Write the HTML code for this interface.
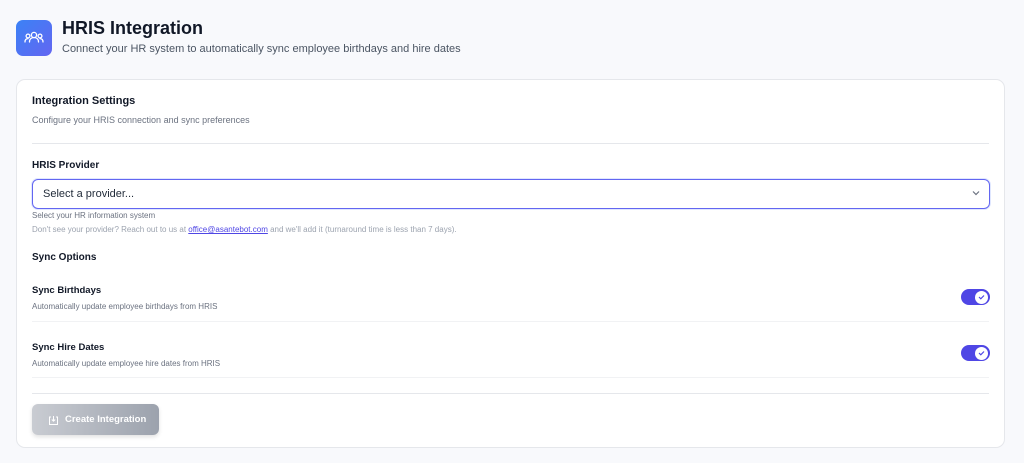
<!DOCTYPE html>
<html><head><meta charset="utf-8"><style>
*{box-sizing:border-box;margin:0;padding:0}
body{width:1024px;height:463px;background:#f8f9fc;font-family:"Liberation Sans",sans-serif;position:relative;overflow:hidden;color:#111827}
.a{position:absolute;white-space:nowrap}
.icon{left:16px;top:20px;width:36px;height:36px;border-radius:7px;background:linear-gradient(135deg,#3b82f6,#6366f1)}
.card{left:16px;top:79px;width:989px;height:369px;background:#fff;border:1px solid #e5e7eb;border-radius:9px}
.hr{height:1px;background:#e5e7eb;left:32px;width:957px}
.hr2{height:1px;background:#f1f2f4;left:32px;width:957px}
.b{font-weight:bold;font-size:10px;color:#111827}
.s{font-size:8px;color:#6b7280}
.tog{left:961px;width:29px;height:16px;border-radius:8px;background:#4f46e5}
.tog i{position:absolute;right:2px;top:1.5px;width:13px;height:13px;border-radius:50%;background:#fff}
.tog svg{position:absolute;right:4px;top:4px}
</style></head><body>
<div class="a icon"><svg width="36" height="36" viewBox="0 0 36 36" fill="none" stroke="#fff" stroke-width="1.3" stroke-linecap="round"><circle cx="18" cy="15" r="2.6"/><path d="M13.5 22c0-3 2-4.5 4.5-4.5s4.5 1.5 4.5 4.5"/><circle cx="12" cy="16" r="1.9"/><path d="M9 22c0-2.3 1.2-3.4 3-3.4"/><circle cx="24" cy="16" r="1.9"/><path d="M27 22c0-2.3-1.2-3.4-3-3.4"/></svg></div>
<div class="a" style="left:62px;top:18px;font-size:18px;font-weight:bold">HRIS Integration</div>
<div class="a" style="left:62px;top:43px;font-size:11px;color:#4b5563">Connect your HR system to automatically sync employee birthdays and hire dates</div>
<div class="a card"></div>
<div class="a" style="left:32px;top:95px;font-size:11px;font-weight:bold">Integration Settings</div>
<div class="a" style="left:32px;top:115px;font-size:9px;color:#6b7280">Configure your HRIS connection and sync preferences</div>
<div class="a hr" style="top:143px"></div>
<div class="a b" style="left:32px;top:160px">HRIS Provider</div>
<div class="a" style="left:32px;top:179px;width:958px;height:30px;border:1.5px solid #6366f1;border-radius:6px;box-shadow:0 0 0 1px #e0e7ff"></div>
<div class="a" style="left:43px;top:188px;font-size:11px;color:#1f2937">Select a provider...</div>
<svg class="a" style="left:971px;top:189px" width="10" height="8" viewBox="0 0 10 8"><path d="M2 2.5l3 3 3-3" stroke="#6b7280" stroke-width="1.2" fill="none"/></svg>
<div class="a s" style="left:32px;top:211px">Select your HR information system</div>
<div class="a s" style="left:32px;top:225px;color:#9ca3af">Don't see your provider? Reach out to us at <span style="color:#4f46e5;text-decoration:underline">office@asantebot.com</span> and we'll add it (turnaround time is less than 7 days).</div>
<div class="a b" style="left:32px;top:252px">Sync Options</div>
<div class="a b" style="left:32px;top:285px;font-size:9.5px">Sync Birthdays</div>
<div class="a s" style="left:32px;top:302px">Automatically update employee birthdays from HRIS</div>
<div class="a tog" style="top:289px"><i></i><svg width="9" height="8" viewBox="0 0 9 8"><path d="M2 4l1.8 1.8L7 2.5" stroke="#4f46e5" stroke-width="1.2" fill="none"/></svg></div>
<div class="a hr2" style="top:321px"></div>
<div class="a b" style="left:32px;top:342px;font-size:9.5px">Sync Hire Dates</div>
<div class="a s" style="left:32px;top:359px">Automatically update employee hire dates from HRIS</div>
<div class="a tog" style="top:345px"><i></i><svg width="9" height="8" viewBox="0 0 9 8"><path d="M2 4l1.8 1.8L7 2.5" stroke="#4f46e5" stroke-width="1.2" fill="none"/></svg></div>
<div class="a hr2" style="top:377px"></div>
<div class="a hr" style="top:393px"></div>
<div class="a" style="left:32px;top:404px;width:127px;height:31px;border-radius:6px;background:linear-gradient(90deg,#c9ccd2,#9ca2ad);box-shadow:0 2px 4px rgba(0,0,0,.12)"></div>
<svg class="a" style="left:48px;top:415px" width="11" height="11" viewBox="0 0 11 11" fill="none" stroke="#fff" stroke-width="1"><path d="M3 2H1.5v7.5h8V2H8M5.5 1v5M3.8 4.5l1.7 1.7 1.7-1.7"/></svg>
<div class="a" style="left:65px;top:414px;font-size:9.5px;font-weight:bold;color:#fff">Create Integration</div>
</body></html>
